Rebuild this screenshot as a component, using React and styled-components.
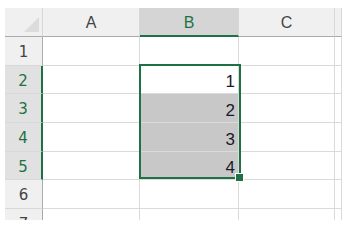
import React from "react";
import styled, { createGlobalStyle } from "styled-components";

const GlobalStyle = createGlobalStyle`
  html, body {
    margin: 0;
    padding: 0;
    background: #ffffff;
  }
  body {
    font-family: "Liberation Sans", Arial, sans-serif;
  }
`;

const GREEN = "#1e7145";
const ROW_H = 28.7;

const columns = ["A", "B", "C", ""];
const rows = [1, 2, 3, 4, 5, 6, 7];
const values = { 2: 1, 3: 2, 4: 3, 5: 4 };
const selectedRows = [2, 3, 4, 5];

const App = () => {
  return (
    <Page>
      <GlobalStyle />
      <Sheet>
        <Corner>
          <Triangle />
        </Corner>
        {columns.map((c, i) => (
          <ColHeader key={"h" + i} $selected={c === "B"}>
            {c}
          </ColHeader>
        ))}
        {rows.map((r) => (
          <React.Fragment key={r}>
            <RowHeader $selected={selectedRows.includes(r)}>{r}</RowHeader>
            {columns.map((c, i) => (
              <Cell key={c + i} $shaded={c === "B" && r > 2 && r < 6}>
                {c === "B" && values[r]}
              </Cell>
            ))}
          </React.Fragment>
        ))}
        <Selection>
          <Handle />
        </Selection>
      </Sheet>
    </Page>
  );
};

const Page = styled.div`
  width: 342px;
  height: 241px;
  padding: 8px 0 0 5px;
  box-sizing: border-box;
  overflow: hidden;
`;

const Sheet = styled.div`
  position: relative;
  display: grid;
  grid-template-columns: 38px 97px 99px 96px 1fr;
  grid-template-rows: 29px repeat(7, ${ROW_H}px);
  height: 212px;
  overflow: hidden;
`;

const Corner = styled.div`
  display: flex;
  align-items: flex-end;
  justify-content: flex-end;
  padding: 0 3px 4px 0;
  background: #f0f0f0;
  border-right: 1px solid #d8d8d8;
  border-bottom: 1px solid #ababab;
  box-sizing: border-box;
`;

const Triangle = styled.div`
  width: 0;
  height: 0;
  border-left: 15px solid transparent;
  border-bottom: 15px solid #dcdcdc;
`;

const ColHeader = styled.div`
  display: flex;
  align-items: center;
  justify-content: center;
  box-sizing: border-box;
  background: ${(p) => (p.$selected ? "#d5d5d5" : "#f0f0f0")};
  color: ${(p) => (p.$selected ? GREEN : "#444444")};
  border-right: 1px solid #d8d8d8;
  border-bottom: ${(p) => (p.$selected ? `2px solid ${GREEN}` : "1px solid #ababab")};
  font-size: 16px;
  padding-top: ${(p) => (p.$selected ? "2px" : "1px")};
`;

const RowHeader = styled.div`
  display: flex;
  align-items: center;
  justify-content: center;
  box-sizing: border-box;
  background: ${(p) => (p.$selected ? "#e1e1e1" : "#f0f0f0")};
  color: ${(p) => (p.$selected ? GREEN : "#444444")};
  border-bottom: 1px solid #d8d8d8;
  border-right: ${(p) => (p.$selected ? `2px solid ${GREEN}` : "1px solid #ababab")};
  font-family: "DejaVu Sans", sans-serif;
  font-size: 15px;
  padding-top: 2px;
`;

const Cell = styled.div`
  display: flex;
  align-items: flex-end;
  justify-content: flex-end;
  box-sizing: border-box;
  background: ${(p) => (p.$shaded ? "#c8c8c8" : "#ffffff")};
  border-right: 1px solid #dadada;
  border-bottom: 1px solid #dadada;
  color: #1a1a2a;
  font-size: 17px;
  padding: 0 3px 3px 0;
  line-height: 1;
`;

const Selection = styled.div`
  position: absolute;
  left: 134px;
  top: ${29 + ROW_H - 2}px;
  width: 102px;
  height: ${ROW_H * 4 + 1}px;
  border: 2px solid ${GREEN};
  box-sizing: border-box;
  pointer-events: none;
`;

const Handle = styled.div`
  position: absolute;
  right: -5px;
  bottom: -5px;
  width: 7px;
  height: 7px;
  background: ${GREEN};
  border: 1px solid #ffffff;
`;

export default App;
